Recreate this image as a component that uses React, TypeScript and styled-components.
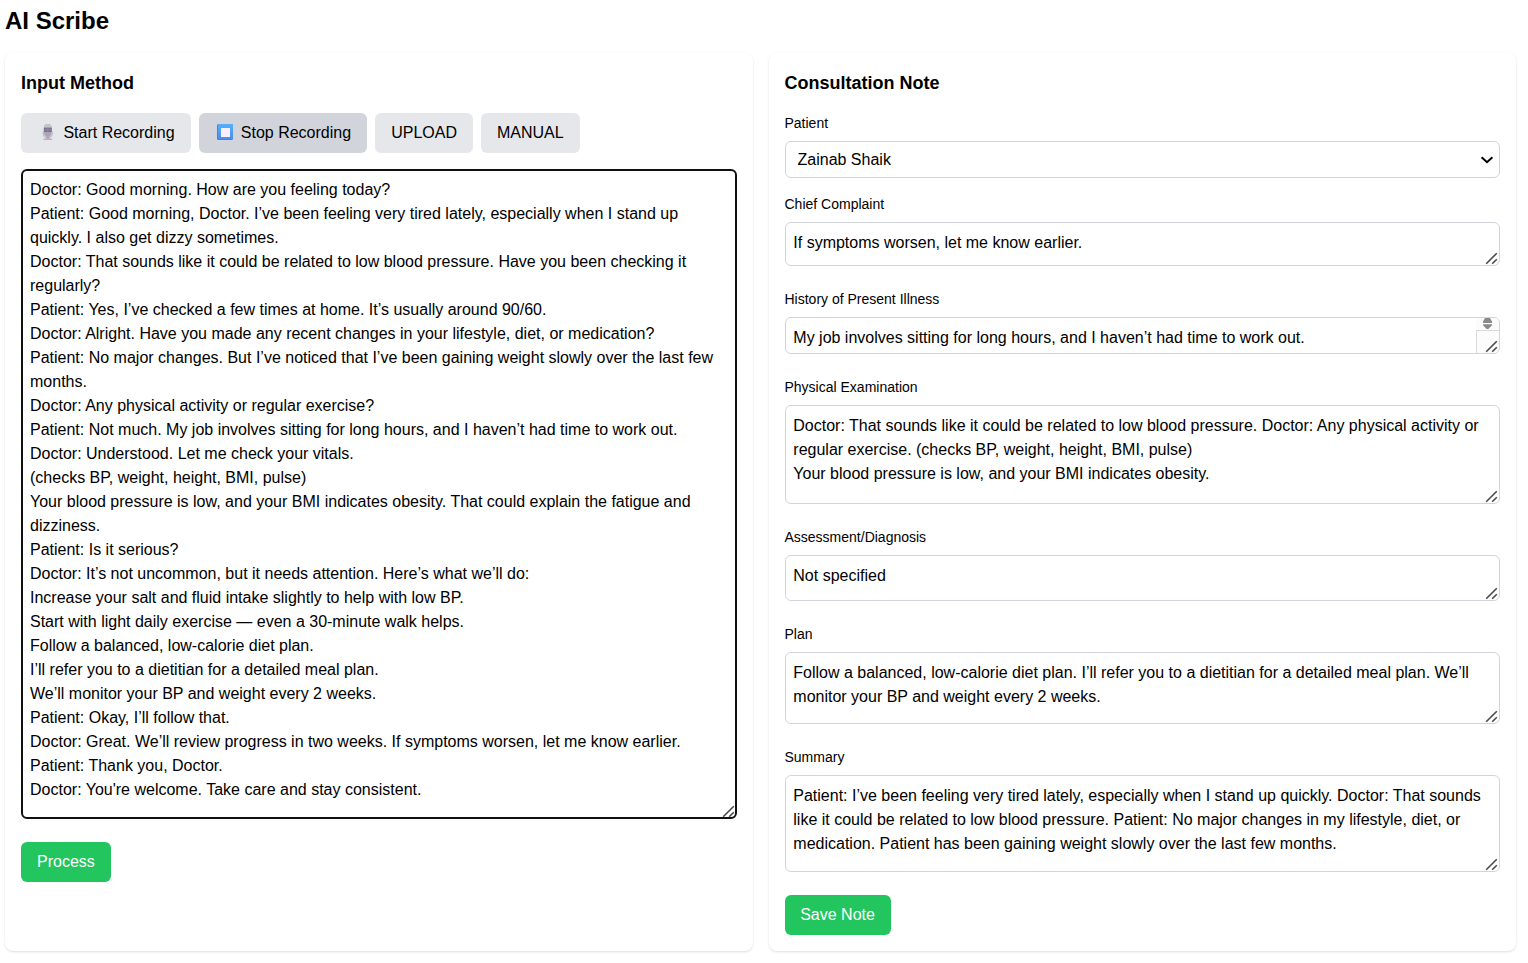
import React from "react";
import styled, { createGlobalStyle, css } from "styled-components";

const GlobalStyle = createGlobalStyle`
  *, *::before, *::after { box-sizing: border-box; }
  body {
    margin: 0;
    background: #fff;
    color: #000;
    font-family: "Liberation Sans", Arial, sans-serif;
    font-size: 16px;
    line-height: 24px;
  }
`;

const Page = styled.main`
  padding: 5px 12px 12px 5px;
`;

const Title = styled.h1`
  margin: 0 0 16px;
  font-size: 24px;
  line-height: 32px;
  font-weight: 700;
`;

const Columns = styled.div`
  display: grid;
  grid-template-columns: 1fr 1fr;
  gap: 16px;
`;

const Card = styled.section`
  min-width: 0;
  height: 898px;
  padding: 16px;
  background: #fff;
  border-radius: 8px;
  box-shadow: 0 1px 3px rgba(0, 0, 0, 0.1), 0 1px 2px -1px rgba(0, 0, 0, 0.1);
`;

const CardTitle = styled.h2`
  margin: 0 0 16px;
  font-size: 18px;
  line-height: 28px;
  font-weight: 700;
`;

const ButtonRow = styled.div`
  display: flex;
  gap: 8px;
  margin-bottom: 16px;
`;

const Button = styled.button<{ $width: number; $inset?: number; $variant?: "active" | "primary" }>`
  display: flex;
  align-items: center;
  width: ${(p) => p.$width}px;
  height: 40px;
  padding: 0 0 0 ${(p) => p.$inset ?? 16}px;
  border: 0;
  border-radius: 6px;
  font: inherit;
  white-space: nowrap;
  color: ${(p) => (p.$variant === "primary" ? "#fff" : "#000")};
  background: ${(p) =>
    p.$variant === "primary" ? "#22c55e" : p.$variant === "active" ? "#d1d5db" : "#e5e7eb"};
`;

const EmojiSlot = styled.span<{ $width: number }>`
  display: flex;
  flex: none;
  width: ${(p) => p.$width}px;
  padding-bottom: 1px;
`;

const Field = styled.div<{ $gap: number }>`
  margin-bottom: ${(p) => p.$gap}px;
`;

const Label = styled.label`
  display: block;
  margin-bottom: 8px;
  font-size: 14px;
  line-height: 20px;
`;

const ControlFrame = styled.div`
  position: relative;
`;

const control = css`
  display: block;
  width: 100%;
  margin: 0;
  border: 1px solid #d1d5db;
  border-radius: 6px;
  outline: none;
  background: #fff;
  color: #000;
  font: inherit;
`;

const Select = styled.select`
  ${control}
  height: 37px;
  padding: 0 12px;
  appearance: none;
`;

const TextArea = styled.textarea<{ $height: number; $focused?: boolean }>`
  ${control}
  height: ${(p) => p.$height}px;
  padding: 8px 8px 8px 7.8px;
  overflow: hidden;
  resize: none;
  ${(p) =>
    p.$focused &&
    css`
      padding: 7px;
      border: 2px solid #101010;
    `}
`;

const Chevron = styled.svg`
  position: absolute;
  right: 6px;
  top: 14px;
  pointer-events: none;
`;

const GripIcon = styled.svg`
  position: absolute;
  right: 2px;
  bottom: 1px;
  pointer-events: none;
`;

const Scroller = styled.div`
  position: absolute;
  top: 1px;
  right: 1px;
  bottom: 1px;
  width: 23px;
  background: #fcfcfc;
  border-radius: 0 5px 5px 0;
  overflow: hidden;
`;

const ScrollCorner = styled.div`
  height: 23px;
  margin-top: 12px;
  border-top: 1px solid #d9d9d9;
  border-left: 1px solid #d9d9d9;
`;

const ScrollArrows = styled.svg`
  position: absolute;
  top: 0;
  left: 7px;
`;

const MicIcon = () => (
  <svg width="22" height="17" viewBox="0 0 22 17">
    <path d="M6.3 7.5v1.9c0 2.4 1.6 3.8 4.5 3.8s4.5-1.4 4.5-3.8V7.5" fill="none" stroke="#c3bccc" strokeWidth="1.3" />
    <rect x="9.3" y="12.3" width="3" height="3" fill="#aaa2b3" />
    <path d="M6.2 16c0-1.3 1.2-2 4.6-2s4.6.7 4.6 2z" fill="#bab3c2" />
    <rect x="7" y="0" width="7.6" height="12.4" rx="3.6" fill="#aca4b8" />
    <path d="M7 4V3.6a3.8 3.6 0 0 1 7.6 0V4z" fill="#c6c3ca" />
    <rect x="6.8" y="3.6" width="8" height="4.4" fill="#7d728e" />
    <path d="M7 5.9h7.6M10.8 3.6V8" stroke="#9b91aa" strokeWidth=".7" />
  </svg>
);

const StopIcon = () => (
  <svg width="20" height="17" viewBox="0 0 20 17">
    <defs>
      <linearGradient id="stop-face" x1="0" y1="0" x2="0" y2="1">
        <stop offset="0" stopColor="#55b0fa" />
        <stop offset="1" stopColor="#4c8ded" />
      </linearGradient>
    </defs>
    <rect x="2" y="0" width="16" height="16" rx="1.5" fill="#3d83df" />
    <rect x="3" y="0" width="15" height="15" rx="1.2" fill="url(#stop-face)" />
    <rect x="6" y="4" width="9" height="9" rx=".5" fill="#faefff" />
  </svg>
);

const Grip = () => (
  <GripIcon width="13" height="13" viewBox="0 0 13 13">
    <path d="M1.2 11.8 11.8 1.2M7.2 11.8 11.8 7.2" stroke="#4a4a4a" strokeWidth="1.6" />
  </GripIcon>
);

const transcript = `Doctor: Good morning. How are you feeling today?
Patient: Good morning, Doctor. I’ve been feeling very tired lately, especially when I stand up quickly. I also get dizzy sometimes.
Doctor: That sounds like it could be related to low blood pressure. Have you been checking it regularly?
Patient: Yes, I’ve checked a few times at home. It’s usually around 90/60.
Doctor: Alright. Have you made any recent changes in your lifestyle, diet, or medication?
Patient: No major changes. But I’ve noticed that I’ve been gaining weight slowly over the last few months.
Doctor: Any physical activity or regular exercise?
Patient: Not much. My job involves sitting for long hours, and I haven’t had time to work out.
Doctor: Understood. Let me check your vitals.
(checks BP, weight, height, BMI, pulse)
Your blood pressure is low, and your BMI indicates obesity. That could explain the fatigue and dizziness.
Patient: Is it serious?
Doctor: It’s not uncommon, but it needs attention. Here’s what we’ll do:
Increase your salt and fluid intake slightly to help with low BP.
Start with light daily exercise — even a 30-minute walk helps.
Follow a balanced, low-calorie diet plan.
I’ll refer you to a dietitian for a detailed meal plan.
We’ll monitor your BP and weight every 2 weeks.
Patient: Okay, I’ll follow that.
Doctor: Great. We’ll review progress in two weeks. If symptoms worsen, let me know earlier.
Patient: Thank you, Doctor.
Doctor: You're welcome. Take care and stay consistent.`;

const noteFields = [
  { label: "Chief Complaint", height: 44, text: "If symptoms worsen, let me know earlier." },
  {
    label: "History of Present Illness",
    height: 37,
    scroll: true,
    text: "My job involves sitting for long hours, and I haven’t had time to work out.",
  },
  {
    label: "Physical Examination",
    height: 99,
    text: "Doctor: That sounds like it could be related to low blood pressure. Doctor: Any physical activity or regular exercise. (checks BP, weight, height, BMI, pulse)\nYour blood pressure is low, and your BMI indicates obesity.",
  },
  { label: "Assessment/Diagnosis", height: 46, text: "Not specified" },
  {
    label: "Plan",
    height: 72,
    text: "Follow a balanced, low-calorie diet plan. I’ll refer you to a dietitian for a detailed meal plan. We’ll monitor your BP and weight every 2 weeks.",
  },
  {
    label: "Summary",
    height: 97,
    text: "Patient: I’ve been feeling very tired lately, especially when I stand up quickly. Doctor: That sounds like it could be related to low blood pressure. Patient: No major changes in my lifestyle, diet, or medication. Patient has been gaining weight slowly over the last few months.",
  },
];

export default function App() {
  return (
    <>
      <GlobalStyle />
      <Page>
        <Title>AI Scribe</Title>
        <Columns>
          <Card>
            <CardTitle>Input Method</CardTitle>
            <ButtonRow>
              <Button $width={170}>
                <EmojiSlot $width={26.4}>
                  <MicIcon />
                </EmojiSlot>
                Start Recording
              </Button>
              <Button $width={168} $variant="active">
                <EmojiSlot $width={25.8}>
                  <StopIcon />
                </EmojiSlot>
                Stop Recording
              </Button>
              <Button $width={98} $inset={16.2}>
                UPLOAD
              </Button>
              <Button $width={99}>MANUAL</Button>
            </ButtonRow>
            <Field $gap={23}>
              <ControlFrame>
                <TextArea $height={650} $focused spellCheck={false} defaultValue={transcript} />
                <Grip />
              </ControlFrame>
            </Field>
            <Button $width={90} $variant="primary">
              Process
            </Button>
          </Card>
          <Card>
            <CardTitle>Consultation Note</CardTitle>
            <Field $gap={16}>
              <Label>Patient</Label>
              <ControlFrame>
                <Select defaultValue="zainab">
                  <option value="zainab">Zainab Shaik</option>
                </Select>
                <Chevron width="14" height="10" viewBox="0 0 14 10">
                  <path d="M1.6 2.2 7 7.2l5.4-5" fill="none" stroke="#000" strokeWidth="2" />
                </Chevron>
              </ControlFrame>
            </Field>
            {noteFields.map((f) => (
              <Field key={f.label} $gap={23}>
                <Label>{f.label}</Label>
                <ControlFrame>
                  <TextArea $height={f.height} spellCheck={false} defaultValue={f.text} />
                  {f.scroll && (
                    <Scroller>
                      <ScrollCorner />
                      <ScrollArrows width="9" height="12" viewBox="0 0 9 12">
                        <path d="M0 5V3.4L2 0h5l2 3.4V5zM0 6.3h9v1L5.4 11H3.6L0 7.3z" fill="#8a8a8a" />
                      </ScrollArrows>
                    </Scroller>
                  )}
                  <Grip />
                </ControlFrame>
              </Field>
            ))}
            <Button $width={106} $inset={15.7} $variant="primary">
              Save Note
            </Button>
          </Card>
        </Columns>
      </Page>
    </>
  );
}
